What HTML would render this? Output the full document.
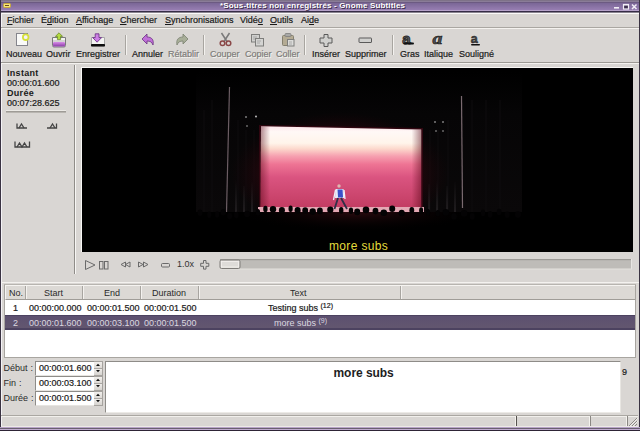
<!DOCTYPE html>
<html><head><meta charset="utf-8">
<style>
*{margin:0;padding:0;box-sizing:border-box}
html,body{width:640px;height:431px;overflow:hidden}
body{position:relative;background:#d9d6d3;font-family:"Liberation Sans",sans-serif;color:#1a1a1a}
.a{position:absolute}
.t{position:absolute;white-space:nowrap;line-height:1;-webkit-text-stroke:0.2px currentColor}
#title{left:0;top:0;width:640px;height:11px;background:linear-gradient(#7e7288 0,#7e7288 1px,#8a7c98 1px,#8a7c98 2px,#6c5a82 2px,#6c5a82 3px,#7a6696 3px,#977eb2 10px,#b6a2ca 10px)}
#menu .t{font-size:9px;top:16px}
#tb .t{font-size:9px;top:50px}
.sep{position:absolute;width:2px;background:linear-gradient(90deg,#a8a5a0 50%,#f4f2ef 50%)}
.spin{left:35px;width:60px;height:15px;background:#fff;border-top:1px solid #8e8c88;border-left:1px solid #8e8c88;border-bottom:1px solid #e6e4e0}
.spin .t{left:3px;top:1.5px;font-size:9px}
.sbtn{position:absolute;left:94px;width:9px;height:15px;border:1px solid #a6a39f;border-left:none;background:linear-gradient(#f2f0ed 0,#dcd9d5 6px,#a8a5a1 6px,#a8a5a1 7px,#eeece9 7px,#d2cfcb 14px)}
</style></head><body>
<!-- title bar -->
<div id="title" class="a"></div>
<div class="a" style="left:0;top:11px;width:640px;height:1px;background:#362c46"></div><div class="a" style="left:0;top:12px;width:640px;height:1px;background:#8a8590"></div>
<div class="a" style="left:3px;top:2.5px;width:8px;height:5px;background:#f4e47a;border:1px solid #c8a838;border-radius:1.5px"></div><div class="a" style="left:5px;top:4.5px;width:4px;height:1px;background:#6a4a20"></div>
<div class="t" style="left:220px;top:1.5px;font-size:8px;font-weight:bold;color:#fff;letter-spacing:0.16px;-webkit-text-stroke:0;text-shadow:1px 1px 0 #3a2c4a">*Sous-titres non enregistrés - Gnome Subtitles</div>
<!-- window buttons -->
<svg class="a" style="left:600px;top:0" width="40" height="12" viewBox="600 0 40 12">
 <rect x="614" y="7" width="5" height="1.6" fill="#f2eef6"/>
 <rect x="623.5" y="4.5" width="5" height="4.5" fill="#3e3050" stroke="#f2eef6" stroke-width="1.2"/>
 <rect x="623" y="4" width="6" height="1.5" fill="#f2eef6"/>
 <path d="M632 4.5 L636.5 9 M636.5 4.5 L632 9" stroke="#f2eef6" stroke-width="1.5"/>
</svg>
<!-- window borders -->
<div class="a" style="left:0;top:0;width:1px;height:431px;background:#3a3342"></div>
<div class="a" style="left:639px;top:0;width:1px;height:431px;background:#3a3342"></div>
<div class="a" style="left:1px;top:13px;width:638px;height:1px;background:#fbfaf9"></div>
<div class="a" style="left:1px;top:13px;width:1px;height:414px;background:#f4f2f6"></div>

<!-- menu -->
<div id="menu">
<div class="t" style="left:7px"><u>F</u>ichier</div>
<div class="t" style="left:41px">É<u>d</u>ition</div>
<div class="t" style="left:76px"><u>A</u>ffichage</div>
<div class="t" style="left:120px"><u>C</u>hercher</div>
<div class="t" style="left:165px"><u>S</u>ynchronisations</div>
<div class="t" style="left:240px">Vidé<u>o</u></div>
<div class="t" style="left:270px"><u>O</u>utils</div>
<div class="t" style="left:301px">Ai<u>d</u>e</div>
</div>
<div class="a" style="left:1px;top:27px;width:638px;height:1px;background:#aaa7a2"></div>
<div class="a" style="left:1px;top:28px;width:638px;height:1px;background:#f4f2ef"></div>

<!-- toolbar -->
<div id="tb">
<div class="t" style="left:6px">Nouveau</div>
<div class="t" style="left:46px">Ouvrir</div>
<div class="t" style="left:76px">Enregistrer</div>
<div class="t" style="left:132px">Annuler</div>
<div class="t" style="left:168px;color:#7e7c79;text-shadow:1px 1px 0 #f6f5f2">Rétablir</div>
<div class="t" style="left:210px;color:#7e7c79;text-shadow:1px 1px 0 #f6f5f2">Couper</div>
<div class="t" style="left:245px;color:#7e7c79;text-shadow:1px 1px 0 #f6f5f2">Copier</div>
<div class="t" style="left:276px;color:#7e7c79;text-shadow:1px 1px 0 #f6f5f2">Coller</div>
<div class="t" style="left:312px">Insérer</div>
<div class="t" style="left:345px">Supprimer</div>
<div class="t" style="left:400px">Gras</div>
<div class="t" style="left:424px">Italique</div>
<div class="t" style="left:459px">Souligné</div>
</div>
<div class="sep" style="left:125px;top:35px;height:20px"></div>
<div class="sep" style="left:203px;top:35px;height:20px"></div>
<div class="sep" style="left:304px;top:35px;height:20px"></div>
<div class="sep" style="left:392px;top:35px;height:20px"></div>
<div class="a" style="left:1px;top:62px;width:638px;height:1px;background:#9c9994"></div>
<div class="a" style="left:1px;top:63px;width:638px;height:1px;background:#f4f2ef"></div>


<!-- toolbar icons -->
<svg class="a" style="left:0;top:0" width="640" height="62" viewBox="0 0 640 62">
 <defs>
  <linearGradient id="gp" x1="0" y1="0" x2="0" y2="1"><stop offset="0" stop-color="#d88ee8"/><stop offset="1" stop-color="#8a3aa8"/></linearGradient>
 </defs>
 <!-- Nouveau -->
 <rect x="16.5" y="33.5" width="11" height="12" fill="#fafaf8" stroke="#85858c" stroke-width="1"/>
 <circle cx="25.7" cy="37.2" r="2.8" fill="#f4f0f8" stroke="#d6e03a" stroke-width="1.8"/>
 <!-- Ouvrir -->
 <path d="M52.5 37.5 h13 v8 a1.5 1.5 0 0 1 -1.5 1.5 h-10 a1.5 1.5 0 0 1 -1.5 -1.5z" fill="#f2f2f0" stroke="#7a7a7c" stroke-width="1"/>
 <rect x="53" y="42" width="12" height="4.5" rx="1" fill="url(#gp)"/>
 <rect x="53" y="40.5" width="12" height="1" fill="#b8b8b8"/>
 <path d="M59 32.8 l3.6 3.6 l-2 0 v3.2 h-3.2 v-3.2 h-2z" fill="#b4dc40" stroke="#5e7e1e" stroke-width="0.7"/>
 <!-- Enregistrer -->
 <path d="M91.5 37.5 h13 v8.5 h-13z" fill="#f4f4f2" stroke="#a8a8a8" stroke-width="1"/>
 <rect x="91" y="44" width="14" height="2.6" rx="0.8" fill="#0e0e0e"/>
 <path d="M95.2 33.8 h3.8 v3.8 h2.6 l-4.5 4.6 l-4.5 -4.6 h2.6z" fill="#cc80e4" stroke="#642880" stroke-width="0.8"/>
 <!-- Annuler -->
 <path d="M142 39 l5 -5 v3 c5 0 7 3 6 8 c-1 -3 -3 -4 -6 -4 v3z" fill="#c070d8" stroke="#6a3080" stroke-width="0.8"/>
 <!-- Retablir -->
 <path d="M188 39 l-5 -5 v3 c-5 0 -7 3 -6 8 c1 -3 3 -4 6 -4 v3z" fill="#a8ae98" stroke="#7a8070" stroke-width="0.8"/>
 <!-- Couper -->
 <path d="M221.5 33 L227 41.5 M229.5 33 L224 41.5" stroke="#7a7a7a" stroke-width="1.5"/>
 <circle cx="222.5" cy="43.3" r="2.3" fill="none" stroke="#8a4848" stroke-width="1.5"/>
 <circle cx="228.5" cy="43.3" r="2.3" fill="none" stroke="#8a4848" stroke-width="1.5"/>
 <!-- Copier -->
 <rect x="251.5" y="34.5" width="8" height="7.5" fill="#d0d0ce" stroke="#7e7e7c"/>
 <path d="M253 37 h4 M253 39 h3" stroke="#a0a09e" stroke-width="0.8"/>
 <rect x="255.5" y="38.5" width="8" height="7.5" fill="#d4d4d2" stroke="#7e7e7c"/>
 <path d="M257 41 h4 M257 43 h3" stroke="#a0a09e" stroke-width="0.8"/>
 <!-- Coller -->
 <rect x="282.5" y="35.5" width="11" height="10" rx="1" fill="#b4ab94" stroke="#85806e"/>
 <rect x="285" y="33.5" width="6" height="3" rx="1" fill="#a8a8a6" stroke="#7e7e7c" stroke-width="0.8"/>
 <rect x="287.5" y="39.5" width="6.5" height="6.5" fill="#dcdcda" stroke="#7e7e7c"/>
 <path d="M289 42 h3 M289 44 h3" stroke="#a0a09e" stroke-width="0.8"/>
 <!-- Inserer -->
 <path d="M324 34.5 h4 v3.5 h4 v5 h-4 v3.5 h-4 v-3.5 h-4 v-5 h4z" fill="#d0d0ce" stroke="#5a5a5a" stroke-width="1"/>
 <!-- Supprimer -->
 <rect x="359" y="38" width="12.5" height="4.5" rx="0.5" fill="#d0d0ce" stroke="#5a5a5a" stroke-width="1"/>
 <!-- Gras -->
 <text x="402.3" y="44" font-family="Liberation Sans" font-weight="bold" font-size="14.5" fill="#606060" stroke="#2a2a2a" stroke-width="0.9" transform="translate(402.3 44) scale(1.05 0.95) translate(-402.3 -44)">a</text>
 <rect x="403.5" y="42.5" width="10.5" height="2" rx="1" fill="#111"/>
 <!-- Italique -->
 <text x="432.5" y="44" font-family="Liberation Serif" font-style="italic" font-weight="bold" font-size="18" fill="#505050" stroke="#1e1e1e" stroke-width="0.7" transform="translate(432.5 44) scale(1.1 0.9) translate(-432.5 -44)">a</text>
 <!-- Souligne -->
 <text x="470.8" y="43" font-family="Liberation Sans" font-weight="bold" font-size="12.5" fill="#444" stroke="#222" stroke-width="0.5">a</text>
 <rect x="471" y="44" width="9" height="1.6" rx="0.8" fill="#111"/>
</svg>

<!-- left panel -->
<div class="a" style="left:74px;top:65px;width:1px;height:209px;background:#8f8c88"></div>
<div class="a" style="left:75px;top:65px;width:1px;height:209px;background:#f7f6f4"></div>
<div class="t" style="left:7px;top:69px;font-size:9px;font-weight:bold;letter-spacing:0.3px;-webkit-text-stroke:0">Instant</div>
<div class="t" style="left:7px;top:79px;font-size:9px">00:00:01.600</div>
<div class="t" style="left:7px;top:89px;font-size:9px;font-weight:bold;letter-spacing:0.3px;-webkit-text-stroke:0">Durée</div>
<div class="t" style="left:7px;top:99px;font-size:9px">00:07:28.625</div>
<div class="a" style="left:6px;top:110px;width:60px;height:1px;background:#eceae6"></div>
<div class="a" style="left:6px;top:111px;width:60px;height:2px;background:linear-gradient(#9e9b96 50%,#b8b5b0 50%)"></div>

<!-- video -->
<div class="a" style="left:81px;top:67px;width:552px;height:185px;background:#f8f7f5"></div>
<div class="a" id="video" style="left:82px;top:68px;width:551px;height:184px;background:#000;overflow:hidden"><svg width="551" height="184" viewBox="82 68 551 184" style="display:block">
 <defs>
  <linearGradient id="scr" x1="0" y1="127" x2="0" y2="208" gradientUnits="userSpaceOnUse">
   <stop offset="0" stop-color="#fde8ec"/>
   <stop offset="0.06" stop-color="#fff8f6"/>
   <stop offset="0.2" stop-color="#fff4ea"/>
   <stop offset="0.27" stop-color="#fcd8cc"/>
   <stop offset="0.36" stop-color="#f6a0b0"/>
   <stop offset="0.46" stop-color="#ee7494"/>
   <stop offset="0.62" stop-color="#da5480"/>
   <stop offset="1" stop-color="#c23c62"/>
  </linearGradient>
  <linearGradient id="scrh" x1="0" y1="0" x2="1" y2="0">
   <stop offset="0" stop-color="#500010" stop-opacity="0.45"/>
   <stop offset="0.06" stop-color="#500010" stop-opacity="0"/>
   <stop offset="0.94" stop-color="#500010" stop-opacity="0"/>
   <stop offset="1" stop-color="#500010" stop-opacity="0.45"/>
  </linearGradient>
  <linearGradient id="cur" x1="0" y1="0" x2="0" y2="1">
   <stop offset="0" stop-color="#000"/>
   <stop offset="0.3" stop-color="#060506"/>
   <stop offset="1" stop-color="#0a0809"/>
  </linearGradient>
  <radialGradient id="rglow" cx="0.5" cy="0.55" r="0.5">
   <stop offset="0.55" stop-color="#3a0812" stop-opacity="0.9"/>
   <stop offset="1" stop-color="#1a0408" stop-opacity="0"/>
  </radialGradient>
  <radialGradient id="aglow" cx="0.5" cy="0" r="0.5" gradientTransform="translate(0.5 0) scale(0.45 1) translate(-0.5 0)">
   <stop offset="0" stop-color="#2a0a0e"/>
   <stop offset="1" stop-color="#000" stop-opacity="0"/>
  </radialGradient>
  <linearGradient id="spill" x1="0" y1="0" x2="0" y2="1">
   <stop offset="0" stop-color="#8a8088" stop-opacity="0"/>
   <stop offset="1" stop-color="#8a8088" stop-opacity="0.35"/>
  </linearGradient>
 </defs>
 <rect x="82" y="68" width="551" height="184" fill="#000"/>
 <!-- stage dark curtains -->
 <rect x="196" y="72" width="326" height="140" fill="url(#cur)"/>
 <g stroke="#0f0d0e" stroke-width="1">
  <path d="M204 110 V212 M212 100 V212 M238 120 V212 M246 130 V212 M254 130 V212"/>
  <path d="M430 130 V212 M438 130 V212 M448 120 V212 M472 100 V212 M486 100 V212 M500 100 V212"/>
 </g>
 <ellipse cx="340" cy="168" rx="110" ry="62" fill="url(#rglow)"/>
 <!-- light spill near floor -->
 <g stroke="url(#spill)" stroke-width="1">
  <path d="M236 180 V212 M244 186 V212 M252 182 V212 M429 184 V212 M437 180 V212 M447 186 V212 M455 182 V212"/>
 </g>
 <!-- pillars -->
 <path d="M229.5 87 L226.5 212" stroke="#6c5e64" stroke-width="1.2"/>
 <path d="M461.5 96 L462.5 208" stroke="#7a6a70" stroke-width="1.2"/>
 <!-- lights -->
 <g fill="#d0d0d0">
  <circle cx="246" cy="117" r="0.8"/><circle cx="256" cy="116.5" r="0.9"/><circle cx="247" cy="126" r="0.7"/>
  <circle cx="435" cy="122" r="0.8"/><circle cx="443" cy="122" r="0.8"/><circle cx="436" cy="131" r="0.7"/><circle cx="443" cy="131" r="0.7"/>
 </g>
 <!-- screen -->
 <path d="M259 125 L423 128 V211 H259z" fill="#300610"/>
 <path d="M261 126.3 L421.2 129.5 V208 H260.5z" fill="url(#scr)"/>
 <path d="M261 126.3 L421.2 129.5 V208 H260.5z" fill="url(#scrh)"/>
 <rect x="258" y="207" width="166" height="5" fill="#e4a8b4"/>
 <!-- person -->
 <circle cx="339" cy="186" r="1.7" fill="#e0b8b0"/>
 <path d="M335.5 189 h8 l1 9 h-9.5z" fill="#e8ecf8"/>
 <path d="M337.5 189.5 h5 l0.5 8 h-5z" fill="#3a50c8"/>
 <path d="M335.5 190 L333.5 200 M344 190 L345 199" stroke="#f0f0f8" stroke-width="1.3"/>
 <path d="M338 198 L334.5 209 M341 198 L347 209" stroke="#303048" stroke-width="1.8"/>
 <!-- audience -->
 <rect x="82" y="213" width="551" height="39" fill="#000"/>
 <rect x="82" y="212" width="551" height="40" fill="url(#aglow)"/>
 <g fill="#040304">
  <ellipse cx="200.0" cy="212.8" rx="2.5" ry="3.3"/>
  <ellipse cx="209.3" cy="214.7" rx="2.1" ry="3.3"/>
  <ellipse cx="217.1" cy="214.5" rx="2.1" ry="3.3"/>
  <ellipse cx="223.3" cy="212.3" rx="2.7" ry="3.3"/>
  <ellipse cx="229.7" cy="216.1" rx="2.6" ry="3.3"/>
  <ellipse cx="236.3" cy="215.1" rx="2.3" ry="3.3"/>
  <ellipse cx="247.1" cy="214.0" rx="2.9" ry="3.3"/>
  <ellipse cx="258.0" cy="212.4" rx="2.1" ry="3.3"/>
  <ellipse cx="265.4" cy="209.0" rx="2.2" ry="3.3"/>
  <ellipse cx="273.0" cy="209.3" rx="3.2" ry="3.3"/>
  <ellipse cx="281.9" cy="210.2" rx="3.0" ry="3.3"/>
  <ellipse cx="290.6" cy="208.8" rx="2.1" ry="3.3"/>
  <ellipse cx="297.6" cy="210.4" rx="3.0" ry="3.3"/>
  <ellipse cx="305.2" cy="210.5" rx="2.9" ry="3.3"/>
  <ellipse cx="312.7" cy="211.6" rx="3.2" ry="3.3"/>
  <ellipse cx="319.9" cy="210.9" rx="2.9" ry="3.3"/>
  <ellipse cx="330.3" cy="209.8" rx="3.1" ry="3.3"/>
  <ellipse cx="341.2" cy="210.4" rx="2.2" ry="3.3"/>
  <ellipse cx="351.0" cy="210.7" rx="2.2" ry="3.3"/>
  <ellipse cx="357.2" cy="211.9" rx="3.0" ry="3.3"/>
  <ellipse cx="366.0" cy="209.9" rx="3.3" ry="3.3"/>
  <ellipse cx="375.5" cy="211.1" rx="2.9" ry="3.3"/>
  <ellipse cx="383.8" cy="212.8" rx="3.3" ry="3.3"/>
  <ellipse cx="392.2" cy="208.8" rx="3.0" ry="3.3"/>
  <ellipse cx="401.7" cy="213.0" rx="3.0" ry="3.3"/>
  <ellipse cx="411.8" cy="210.2" rx="2.4" ry="3.3"/>
  <ellipse cx="421.1" cy="210.6" rx="2.0" ry="3.3"/>
  <ellipse cx="428.0" cy="212.3" rx="2.2" ry="3.3"/>
  <ellipse cx="437.8" cy="213.2" rx="2.2" ry="3.3"/>
  <ellipse cx="445.8" cy="212.4" rx="3.3" ry="3.3"/>
  <ellipse cx="454.0" cy="216.4" rx="2.8" ry="3.3"/>
  <ellipse cx="464.1" cy="213.4" rx="3.3" ry="3.3"/>
  <ellipse cx="472.2" cy="216.4" rx="2.5" ry="3.3"/>
  <ellipse cx="483.0" cy="212.9" rx="2.2" ry="3.3"/>
  <ellipse cx="490.1" cy="214.4" rx="2.4" ry="3.3"/>
  <ellipse cx="499.1" cy="212.0" rx="2.4" ry="3.3"/>
  <ellipse cx="507.2" cy="214.8" rx="2.6" ry="3.3"/>
  <ellipse cx="517.9" cy="214.6" rx="3.0" ry="3.3"/>
 </g>
 <text x="329" y="249.5" font-family="Liberation Sans" font-size="12" letter-spacing="0.35" fill="#e4dc3c">more subs</text>
</svg></div>


<!-- left panel icons -->
<svg class="a" style="left:0;top:115px" width="74" height="40" viewBox="0 115 74 40">
 <g fill="none" stroke="#444" stroke-width="1.3" stroke-linejoin="miter">
  <path d="M17 123.5 V128 H27"/><path d="M19 128 L21.5 124 L24 128"/>
  <path d="M47 128 H56.5 V123.5"/><path d="M50 128 L52.5 124 L55 128"/>
  <path d="M15 141.5 V147 H29.5 V141.5"/><path d="M17 147 L19.5 143 L22 147 L24.5 143 L27 147"/>
 </g>
</svg>
<!-- player controls -->
<svg class="a" style="left:80px;top:255px" width="560" height="20" viewBox="80 255 560 20">
 <g fill="none" stroke="#6a6a6a" stroke-width="1">
  <path d="M85.5 260.5 v9 l9.5 -4.5z"/>
  <rect x="99.5" y="261.5" width="3.5" height="7.5"/><rect x="104.5" y="261.5" width="3.5" height="7.5"/>
  <path d="M125.5 262 l-4.5 2.5 l4.5 2.5z M130 262 l-4.5 2.5 l4.5 2.5z"/>
  <path d="M138.5 262 l4.5 2.5 l-4.5 2.5z M143.5 262 l4.5 2.5 l-4.5 2.5z"/>
  <rect x="161.5" y="263.5" width="8" height="3.5" rx="1"/>
  <path d="M203.5 260.5 h2.5 v2.8 h2.8 v3 h-2.8 v2.8 h-2.5 v-2.8 h-2.8 v-3 h2.8z"/>
 </g>
 <rect x="220" y="259" width="412" height="10" fill="#bebcb8"/>
 <rect x="220" y="259" width="412" height="1.2" fill="#9c9a96"/>
 <rect x="631" y="259" width="1" height="10" fill="#e8e6e2"/>
 <rect x="220" y="268.5" width="412" height="1" fill="#e4e2de"/>
 <rect x="220" y="260" width="20" height="8.5" rx="1.5" fill="#dedcd8" stroke="#7e7c78" stroke-width="1"/>
 <rect x="221.5" y="261.5" width="17" height="5.5" fill="none" stroke="#f4f2ee" stroke-width="0.8"/>
</svg>
<div class="t" style="left:177px;top:260px;font-size:9px;color:#333;-webkit-text-stroke:0">1.0x</div>

<!-- list -->
<div class="a" style="left:1px;top:282px;width:638px;height:1px;background:#f4f2ef"></div>
<div class="a" style="left:4px;top:284px;width:632px;height:74px;background:#fff;border:1px solid #a8a5a0;border-top-color:#b8b5b0"></div>
<div class="a" style="left:5px;top:285px;width:630px;height:15px;background:#dcd9d5;border-top:1px solid #f6f4f1;border-left:1px solid #f6f4f1;border-bottom:1px solid #a09d98"></div>
<div class="a" style="left:5px;top:315px;width:630px;height:15px;background:linear-gradient(#4c4260 0,#4c4260 1px,#5c5070 1px,#62566f 13px,#4c4260 13px)"></div>


<div class="a" style="left:25px;top:286px;width:2px;height:13px;background:linear-gradient(90deg,#a8a5a0 50%,#f4f2ef 50%)"></div>
<div class="a" style="left:82px;top:286px;width:2px;height:13px;background:linear-gradient(90deg,#a8a5a0 50%,#f4f2ef 50%)"></div>
<div class="a" style="left:140px;top:286px;width:2px;height:13px;background:linear-gradient(90deg,#a8a5a0 50%,#f4f2ef 50%)"></div>
<div class="a" style="left:198px;top:286px;width:2px;height:13px;background:linear-gradient(90deg,#a8a5a0 50%,#f4f2ef 50%)"></div>
<div class="a" style="left:400px;top:286px;width:2px;height:13px;background:linear-gradient(90deg,#a8a5a0 50%,#f4f2ef 50%)"></div>
<div class="t" style="left:9px;top:289px;font-size:9px;-webkit-text-stroke:0;color:#2a2a2a">No.</div>
<div class="t" style="left:44px;top:289px;font-size:9px;-webkit-text-stroke:0;color:#2a2a2a">Start</div>
<div class="t" style="left:104px;top:289px;font-size:9px;-webkit-text-stroke:0;color:#2a2a2a">End</div>
<div class="t" style="left:152px;top:289px;font-size:9px;-webkit-text-stroke:0;color:#2a2a2a">Duration</div>
<div class="t" style="left:290px;top:289px;font-size:9px;-webkit-text-stroke:0;color:#2a2a2a">Text</div>
<div class="t" style="left:13px;top:304px;font-size:9px">1</div>
<div class="t" style="left:29px;top:304px;font-size:9px">00:00:00.000</div>
<div class="t" style="left:87px;top:304px;font-size:9px">00:00:01.500</div>
<div class="t" style="left:144px;top:304px;font-size:9px">00:00:01.500</div>
<div class="t" style="left:268px;top:304px;font-size:9px">Testing subs <sup style="font-size:7px;vertical-align:baseline;position:relative;top:-3.5px">(12)</sup></div>
<div class="t" style="left:13px;top:319px;font-size:9px;color:#dcd8e0;-webkit-text-stroke:0">2</div>
<div class="t" style="left:29px;top:319px;font-size:9px;color:#dcd8e0;-webkit-text-stroke:0">00:00:01.600</div>
<div class="t" style="left:87px;top:319px;font-size:9px;color:#dcd8e0;-webkit-text-stroke:0">00:00:03.100</div>
<div class="t" style="left:144px;top:319px;font-size:9px;color:#dcd8e0;-webkit-text-stroke:0">00:00:01.500</div>
<div class="t" style="left:274px;top:319px;font-size:9px;color:#dcd8e0;-webkit-text-stroke:0">more subs <sup style="font-size:7px;vertical-align:baseline;position:relative;top:-3.5px">(9)</sup></div>

<!-- edit area -->
<div class="a" style="left:105px;top:361px;width:516px;height:52px;background:#fff;border-top:1px solid #8e8c88;border-left:1px solid #8e8c88;border-right:1px solid #e8e6e2;border-bottom:1px solid #eceae6"></div>


<div class="t" style="left:3.5px;top:364px;font-size:9px;-webkit-text-stroke:0;color:#2a2a2a;word-spacing:0.6px">Début :</div>
<div class="t" style="left:3.5px;top:379px;font-size:9px;-webkit-text-stroke:0;color:#2a2a2a;word-spacing:0.6px">Fin :</div>
<div class="t" style="left:3.5px;top:394px;font-size:9px;-webkit-text-stroke:0;color:#2a2a2a;word-spacing:0.6px">Durée :</div>
<div class="a spin" style="top:361px"><div class="t">00:00:01.600</div></div><div class="sbtn" style="top:361px"></div>
<div class="a spin" style="top:376px"><div class="t">00:00:03.100</div></div><div class="sbtn" style="top:376px"></div>
<div class="a spin" style="top:391px"><div class="t">00:00:01.500</div></div><div class="sbtn" style="top:391px"></div>
<svg class="a" style="left:90px;top:360px" width="14" height="48" viewBox="90 360 14 48">
 <g fill="#111">
  <path d="M96 366 h4 l-2 -2.3z"/><path d="M96 370 h4 l-2 2.3z"/>
  <path d="M96 381 h4 l-2 -2.3z"/><path d="M96 385 h4 l-2 2.3z"/>
  <path d="M96 396 h4 l-2 -2.3z"/><path d="M96 400 h4 l-2 2.3z"/>
 </g>
</svg>
<div class="t" style="left:333.5px;top:366.5px;font-size:12px;font-weight:bold;color:#1e1e1e;letter-spacing:-0.05px;-webkit-text-stroke:0">more subs</div>
<div class="t" style="left:622px;top:368px;font-size:9px">9</div>

<!-- status bar -->
<div class="a" style="left:1px;top:415px;width:637px;height:1px;background:#aaa7a2"></div>
<div class="a" style="left:1px;top:416px;width:637px;height:1px;background:#f2f0ec"></div>
<div class="a" style="left:1px;top:426px;width:637px;height:1px;background:#eceae6"></div>
<div class="a" style="left:515px;top:416px;width:1px;height:10px;background:#f4f2ee"></div>
<div class="a" style="left:516px;top:416px;width:1px;height:10px;background:#55524e"></div>
<div class="a" style="left:589px;top:416px;width:1px;height:10px;background:#f4f2ee"></div>
<div class="a" style="left:590px;top:416px;width:1px;height:10px;background:#8a8783"></div>
<div class="a" style="left:626px;top:416px;width:1px;height:10px;background:#f4f2ee"></div>
<div class="a" style="left:627px;top:416px;width:1px;height:10px;background:#8a8783"></div>
<svg class="a" style="left:626px;top:414px" width="13" height="13" viewBox="626 414 13 13">
 <path d="M637 418 L629 426 M637 421 L632 426 M637 424 L635 426" stroke="#8a8783" stroke-width="1"/>
 <path d="M638 418 L630 426 M638 421 L633 426" stroke="#f8f6f2" stroke-width="0.8"/>
</svg>
<div class="a" style="left:0;top:427px;width:640px;height:4px;background:linear-gradient(#b8a4c8 0,#b8a4c8 1px,#6a6070 1px,#6a6070 2px,#c0acd0 2px,#c0acd0 3px,#2e2436 3px)"></div>
</body></html>
